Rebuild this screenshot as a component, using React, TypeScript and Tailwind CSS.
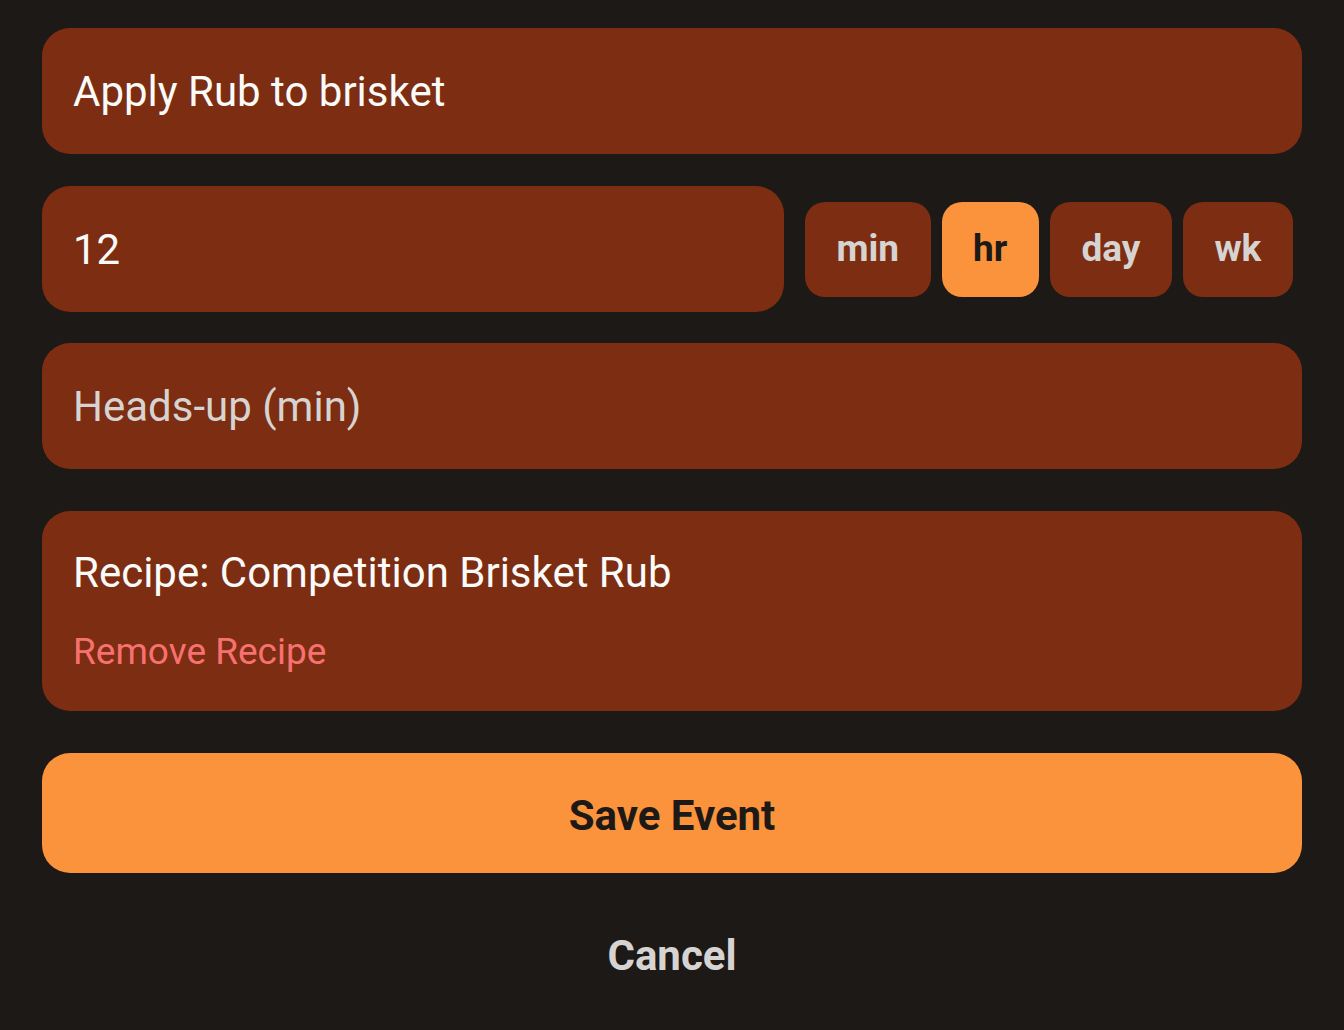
import React from 'react'

const units = ['min', 'hr', 'day', 'wk']

export default function App() {
  const selected = 'hr'

  return (
    <div className="min-h-[1030px] w-full bg-[#1c1917] px-[42px] pt-[28px] font-['Roboto',sans-serif]">
      <div className="flex h-[126px] items-center rounded-[28px] bg-[#7c2d12] px-[31px] text-[42px] text-[#fafaf9]">
        Apply Rub to brisket
      </div>

      <div className="mt-[32px] flex items-center">
        <div className="flex h-[126px] w-[742px] items-center rounded-[28px] bg-[#7c2d12] px-[31px] text-[42px] text-[#fafaf9]">
          12
        </div>
        <div className="ml-[21px] flex gap-[11px]">
          {units.map((u) => (
            <button
              key={u}
              className={
                u === selected
                  ? 'flex h-[95px] items-center rounded-[20px] bg-[#fb923c] px-[31.5px] text-[37px] font-bold text-[#1c1917]'
                  : 'flex h-[95px] items-center rounded-[20px] bg-[#7c2d12] px-[31.5px] text-[37px] font-bold text-[#d6d3d1]'
              }
            >
              {u}
            </button>
          ))}
        </div>
      </div>

      <div className="mt-[31px] flex h-[126px] items-center rounded-[28px] bg-[#7c2d12] px-[31px] text-[42px] text-[#d6d3d1]">
        Heads-up (min)
      </div>

      <div className="mt-[42px] flex h-[200px] flex-col justify-center rounded-[28px] bg-[#7c2d12] px-[31px]">
        <div className="text-[42px] leading-[1.2] text-[#fafaf9]">Recipe: Competition Brisket Rub</div>
        <div className="mt-[31px] text-[37px] leading-[1.2] text-[#f87171]">Remove Recipe</div>
      </div>

      <button className="mt-[42px] flex h-[120px] w-full items-center justify-center rounded-[28px] bg-[#fb923c] pt-[4px] text-[42px] font-bold text-[#1c1917]">
        Save Event
      </button>

      <button className="mt-[40px] flex h-[84px] w-full items-center justify-center text-[42px] font-bold text-[#d6d3d1]">
        Cancel
      </button>
    </div>
  )
}
